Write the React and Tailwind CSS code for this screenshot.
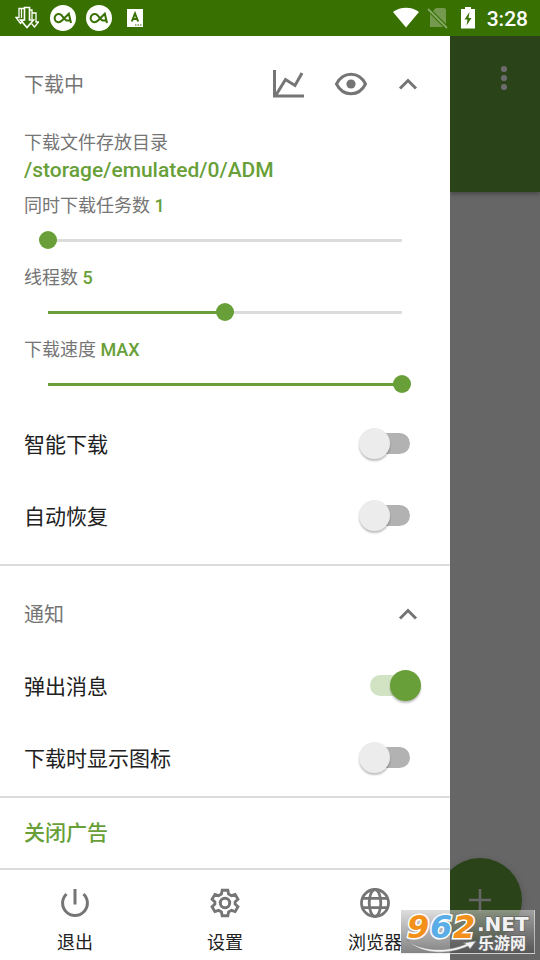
import React, { useState } from "react";

const STROKE = "#757575";

function StatusBar() {
  return (
    <header className="flex h-9 items-center bg-[#387002] pr-3 pl-[15px] text-white">
      <svg className="mr-[11px] h-6 w-6" viewBox="0 0 24 24" fill="none" stroke="currentColor" strokeWidth="1.3">
        <path d="M9 2.500H4v9H1l4.500 6 3-3.500M6.500 3v9" />
        <path d="M9.500 1.500h5v12.500h4L12 21.500 5.500 14h4z" strokeWidth="1.600" />
        <path d="M14.500 4H17v9M17 7h4v9h2.500L19.500 21l-3-3.500" />
      </svg>
      {[0, 1].map((n) => (
        <svg key={n} className="mr-2.5 h-[26px] w-[26px]" viewBox="0 0 26 26">
          <circle cx="13" cy="13" r="13" fill="#fff" />
          <path d="M21 18L18.800 8.700 12 15.500C10.500 17 9.500 17.500 8 17.200a4.100 4.100 0 1 1 3.800-6.700c1.700 2.200 3.200 4.700 5.200 5h3.500" fill="none" stroke="#387002" strokeWidth="2" />
        </svg>
      ))}
      <svg className="ml-[5px] h-[18px] w-4" viewBox="0 0 16 18">
        <path d="M0 0h16v18H0z" fill="#fff" />
        <path d="M4.800 12.500L8 4.500l3.200 8M5.500 10h5" fill="none" stroke="#387002" strokeWidth="2" />
        <path d="M8 16h1.500M10.500 16H12M13 16h1.500" stroke="#387002" strokeWidth="1.200" />
      </svg>
      <div className="ml-auto flex items-center">
        <svg className="h-[22px] w-[26px]" viewBox="0 0 26 22">
          <path d="M0 5C7-.8 19-.8 26 5L13 20.500z" fill="#fff" />
        </svg>
        <svg className="ml-2 h-[22px] w-[22px]" viewBox="0 0 22 22">
          <path d="M9 1h8q2 0 2 2v17H3V7z" fill="#74994f" />
          <path d="M1 2l19 19" stroke="#387002" strokeWidth="4" />
          <path d="M1 2l19 19" stroke="#85a865" strokeWidth="1.800" />
        </svg>
        <svg className="ml-3 h-[22px] w-[14px]" viewBox="0 0 14 22">
          <path d="M4 0h6v2h4v19.500H0V2h4z" fill="#fff" />
          <path d="M8.500 5L3.500 12.500h3L5.500 18.500l5-7.500h-3z" fill="#387002" />
        </svg>
        <time className="ml-3 pt-0.5 font-[Roboto,sans-serif] text-[21px] leading-6 font-medium">3:28</time>
      </div>
    </header>
  );
}

function ChevronUp() {
  return (
    <svg className="h-6 w-6" viewBox="0 0 24 24" fill="none" stroke={STROKE} strokeWidth="3">
      <path d="M4 16.500l8-8 8 8" />
    </svg>
  );
}

function SliderRow({ id, label, initial, min, max, format }) {
  const [value, setValue] = useState(initial);
  const part = (value - min) / (max - min);
  return (
    <div className="h-[72px]">
      <label htmlFor={id} className="block text-[18px] leading-7 text-[#757575]">
        {label} <output className="font-medium text-[#689f38]">{format(value)}</output>
      </label>
      <div className="flex h-10 items-center px-[15px]">
        <input
          id={id}
          type="range"
          min={min}
          max={max}
          value={value}
          onChange={(e) => setValue(Number(e.target.value))}
          style={{ backgroundSize: `calc((100% - 18px) * ${part}) 3px, calc(100% - 18px) 3px` }}
          className="h-[18px] w-full appearance-none bg-[linear-gradient(#689f38,#689f38),linear-gradient(#dcdcdc,#dcdcdc)] bg-[position:9px_center] bg-no-repeat [&::-webkit-slider-thumb]:h-[18px] [&::-webkit-slider-thumb]:w-[18px] [&::-webkit-slider-thumb]:appearance-none [&::-webkit-slider-thumb]:rounded-full [&::-webkit-slider-thumb]:bg-[#689f38]"
        />
      </div>
    </div>
  );
}

function SwitchRow({ label, on = false }) {
  return (
    <label className="flex h-[72px] items-center justify-between pr-10 pb-0.5 pl-6 text-[21px] leading-8 text-[#212121]">
      <span className="pt-1">{label}</span>
      <input
        type="checkbox"
        role="switch"
        defaultChecked={on}
        className="relative h-[21px] w-10 appearance-none rounded-full bg-[#b2b2b2] before:absolute before:-top-[5px] before:-left-[11px] before:h-[31px] before:w-[31px] before:rounded-full before:bg-[#ececec] before:shadow-[0_2px_2px_rgba(0,0,0,0.25)] checked:bg-[#d1e3c3] checked:before:left-5 checked:before:bg-[#689f38]"
      />
    </label>
  );
}

function NavButton({ label, children }) {
  return (
    <button type="button" className="flex flex-1 flex-col items-center pt-[15px] text-[18px] leading-7 text-[#212121]">
      <svg className="mb-2 h-9 w-9" viewBox="0 0 36 36" fill="none" stroke={STROKE} strokeWidth="3">
        {children}
      </svg>
      {label}
    </button>
  );
}

function Drawer() {
  return (
    <main className="flex min-w-0 flex-1 flex-col bg-white">
      <section className="border-b-2 border-[#dcdcdc] pb-3">
        <div className="flex h-24 items-center pr-[30px] pl-6">
          <h2 className="flex-1 pt-0.5 text-[20px] leading-8 text-[#757575]">下载中</h2>
          <button type="button" aria-label="图表" className="mr-[30px]">
            <svg className="h-8 w-8" viewBox="0 0 32 32" fill="none" stroke={STROKE} strokeWidth="3">
              <path d="M2.500 2v26H32" />
              <path d="M4 27L13.500 11.500l9.500 6L30 5" />
            </svg>
          </button>
          <button type="button" aria-label="显示" className="mr-7">
            <svg className="h-[34px] w-[34px]" viewBox="0 0 34 34" fill="none" stroke={STROKE} strokeWidth="3">
              <path d="M2.500 17C9 4 25 4 31.500 17 25 30 9 30 2.500 17z" />
              <circle cx="17" cy="17" r="4.600" fill={STROKE} stroke="none" />
            </svg>
          </button>
          <button type="button" aria-label="收起下载">
            <ChevronUp />
          </button>
        </div>
        <div className="px-6">
          <p className="pt-px text-[18px] leading-5 text-[#757575]">下载文件存放目录</p>
          <p className="pt-[3px] pb-2 text-[21px] leading-7 font-medium text-[#689f38]">/storage/emulated/0/ADM</p>
          <SliderRow id="tasks" label="同时下载任务数" initial={1} min={1} max={5} format={(v) => v} />
          <SliderRow id="threads" label="线程数" initial={5} min={1} max={9} format={(v) => v} />
          <SliderRow id="speed" label="下载速度" initial={100} min={0} max={100} format={(v) => (v === 100 ? "MAX" : v)} />
        </div>
        <SwitchRow label="智能下载" />
        <SwitchRow label="自动恢复" />
      </section>
      <section className="border-b-2 border-[#dcdcdc] pb-0.5">
        <div className="flex h-[84px] items-center justify-between pt-3 pr-[30px] pl-6">
          <h2 className="pt-0.5 text-[20px] leading-8 text-[#757575]">通知</h2>
          <button type="button" aria-label="收起通知">
            <ChevronUp />
          </button>
        </div>
        <SwitchRow label="弹出消息" on />
        <SwitchRow label="下载时显示图标" />
      </section>
      <button type="button" className="h-[72px] border-b-2 border-[#dcdcdc] px-6 text-left text-[21px] leading-8 font-medium text-[#689f38]">
        关闭广告
      </button>
      <nav className="flex h-[90px]">
        <NavButton label="退出">
          <path d="M18 4v15.500M9.500 9A12.400 12.400 0 1 0 26.500 9" />
        </NavButton>
        <NavButton label="设置">
          <path d="M15 4.500h6l.8 4 3 1.700 3.900-1.300 3 5.200-3 2.700v2.400l3 2.700-3 5.200-3.900-1.300-3 1.700-.8 4h-6l-.8-4-3-1.700-3.900 1.300-3-5.200 3-2.700v-2.400l-3-2.700 3-5.200 3.900 1.300 3-1.700z" transform="translate(1 1) scale(.945)" />
          <circle cx="18" cy="18" r="4.700" />
        </NavButton>
        <NavButton label="浏览器">
          <circle cx="18" cy="18" r="13.500" strokeWidth="2.800" />
          <ellipse cx="18" cy="18" rx="5.800" ry="13.500" strokeWidth="2.800" />
          <path d="M5.500 13.300h25M5.500 22.700h25" strokeWidth="2.800" />
        </NavButton>
      </nav>
    </main>
  );
}

function DimmedPage() {
  return (
    <aside className="relative w-[90px] shrink-0 overflow-hidden bg-[#666]">
      <div className="flex h-[156px] justify-end bg-[#2b4318] pt-6 pr-6 shadow-[0_2px_4px_rgba(0,0,0,0.3)]">
        <button type="button" aria-label="更多" className="h-9 w-6">
          <svg className="h-9 w-6" viewBox="0 0 24 36" fill="#6b6b6b">
            <circle cx="12" cy="9" r="3.100" />
            <circle cx="12" cy="18" r="3.100" />
            <circle cx="12" cy="27" r="3.100" />
          </svg>
        </button>
      </div>
      <button
        type="button"
        aria-label="添加"
        className="absolute right-[18px] bottom-[18px] flex h-[84px] w-[84px] items-center justify-center rounded-full bg-[#2b4318] shadow-[0_3px_8px_rgba(0,0,0,0.2)]"
      >
        <svg className="h-[22px] w-[22px]" viewBox="0 0 22 22" stroke="#666" strokeWidth="2.600">
          <path d="M11 0v22M0 11h22" />
        </svg>
      </button>
    </aside>
  );
}

function SiteBadge() {
  return (
    <div className="absolute right-[5px] bottom-1.5 h-11 w-[134px] border-r border-b border-white/50 bg-linear-to-b from-[#c8c8c8]/60 to-[#505050]/70">
      <svg className="h-full w-full overflow-visible" viewBox="0 0 133 43">
        <g fontFamily="DejaVu Sans, sans-serif" fontWeight="bold" fontStyle="italic" fontSize="32" stroke="#fff" strokeWidth="3" paintOrder="stroke">
          <text x="6" y="28" fill="#f39019">9</text>
          <text x="29" y="28" fill="#5aade6">6</text>
          <text x="52" y="28" fill="#f39019">2</text>
        </g>
        <g fill="#f2f2f2" stroke="#666" strokeWidth="1.500" paintOrder="stroke" fontWeight="bold">
          <text x="76" y="21" fontSize="20" fontFamily="DejaVu Sans, sans-serif">.NET</text>
          <text x="77" y="39" fontSize="16" fontFamily="Liberation Sans, Noto Sans CJK SC, sans-serif">乐游网</text>
        </g>
        <path d="M6 30C20 42 48 42 65 34l-3-1 13-2-6 8-2-3C48 45 20 45 6 30z" fill="#f2f2f2" stroke="#777" strokeWidth=".5" />
      </svg>
    </div>
  );
}

export default function App() {
  return (
    <div className="relative flex min-h-screen flex-col overflow-hidden bg-white font-[Roboto,'Noto_Sans_CJK_SC',sans-serif]">
      <StatusBar />
      <div className="flex flex-1">
        <Drawer />
        <DimmedPage />
      </div>
      <SiteBadge />
    </div>
  );
}
